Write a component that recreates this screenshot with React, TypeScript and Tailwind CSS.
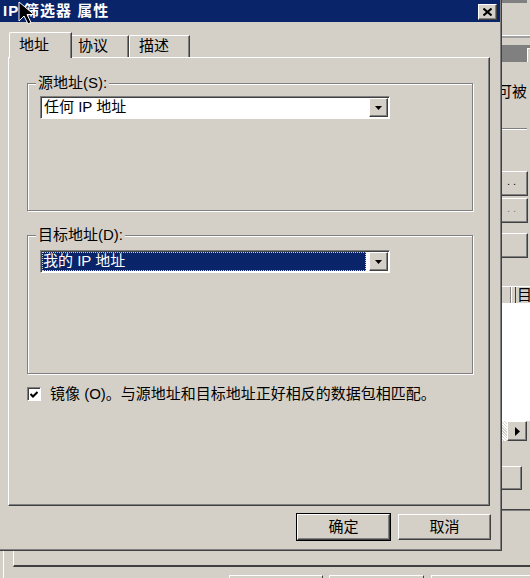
import React from 'react';

// Windows 经典风格的 3D 边框
const raised =
  'border border-t-white border-l-white border-r-[#404040] border-b-[#404040] shadow-[inset_-1px_-1px_0_#808080]';
const sunken =
  'border border-t-[#808080] border-l-[#808080] border-r-white border-b-white shadow-[inset_1px_1px_0_#404040]';
const etched = 'border border-[#808080] shadow-[inset_1px_1px_0_#fff,1px_1px_0_#fff]';

const DownArrow = () => (
  <svg width="7" height="4" viewBox="0 0 7 4">
    <path d="M0 0h7L3.5 4z" fill="#000" />
  </svg>
);

interface ComboProps {
  value: string;
  selected?: boolean;
}

// 下拉框
const Combo = ({ value, selected }: ComboProps) => (
  <div className={`w-[350px] h-[23px] flex bg-white ${sunken}`}>
    <div className="flex-1 p-[1px] pl-[1px]">
      {selected ? (
        <div className="h-full bg-[#0a246a] text-white flex items-center pl-[1px] outline-1 outline-dotted outline-[#d4d0c8] -outline-offset-1 mr-[2px]">
          {value}
        </div>
      ) : (
        <div className="h-full flex items-center pl-[2px] text-black">{value}</div>
      )}
    </div>
    <div className={`w-[19px] h-[19px] mt-[1px] mr-[1px] bg-[#d4d0c8] flex items-center justify-center ${raised}`}>
      <DownArrow />
    </div>
  </div>
);

interface GroupProps {
  label: string;
  height: string;
  children: React.ReactNode;
}

// 分组框
const Group = ({ label, height, children }: GroupProps) => (
  <div className={`relative w-[446px] ${height} ${etched} pt-[12px] pl-[12px]`}>
    <span className="absolute -top-[10px] left-[8px] px-[2px] bg-[#d4d0c8] leading-[18px]">{label}</span>
    {children}
  </div>
);

const WinButton = ({ label, isDefault }: { label: string; isDefault?: boolean }) => (
  <div
    className={`w-[93px] h-[26px] flex items-center justify-center ${
      isDefault ? 'outline outline-1 outline-black' : ''
    } ${raised}`}
  >
    {label}
  </div>
);

const Cursor = () => (
  <svg className="absolute left-[18px] top-[1px]" width="16" height="25" viewBox="0 0 16 25">
    <path d="M1 1v19l5-5 4 8 3-1.5-4-8h7z" fill="#000" stroke="#fff" strokeWidth="1" />
  </svg>
);

export default function App() {
  return (
    <div className="relative w-[530px] h-[578px] overflow-hidden bg-[#d4d0c8] text-[15px] text-black font-['Liberation_Sans','Noto_Sans_CJK_SC',sans-serif] flex flex-col">
      <div className="flex h-[551px]">
        {/* 对话框 */}
        <div className="w-[502px] h-[551px] flex flex-col border-r border-b border-r-[#404040] border-b-[#404040] shadow-[inset_-1px_-1px_0_#808080]">
          <div className="h-[22px] mr-[1px] bg-[#0a246a] flex items-center justify-between pl-[3px] pr-[3px]">
            <span className="text-white font-bold tracking-[1px]">IP 筛选器 属性</span>
            <div className={`w-[19px] h-[16px] mt-[2px] bg-[#d4d0c8] flex items-center justify-center ${raised}`}>
              <svg width="9" height="8" viewBox="0 0 9 8">
                <path d="M0.5 0.5l8 7M8.5 0.5l-8 7" stroke="#000" strokeWidth="2" />
              </svg>
            </div>
          </div>

          <div className="flex-1 pt-[10px] pl-[8px] pr-[10px] pb-[9px] flex flex-col">
            {/* 选项卡 */}
            <div className="flex items-end h-[25px] pl-[1px]">
              <div className="relative z-10 w-[63px] h-[26px] -mb-px bg-[#d4d0c8] border-t border-l border-white border-r border-r-[#404040] rounded-tl-[2px] pl-[9px] flex items-center shadow-[inset_-1px_0_0_#808080]">
                地址
              </div>
              <div className="w-[57px] h-[22px] border-t border-white pl-[6px] flex items-center border-r border-r-[#404040] shadow-[inset_-1px_0_0_#808080]">
                协议
              </div>
              <div className="w-[61px] h-[22px] border-t border-l border-white pl-[9px] flex items-center border-r border-r-[#404040] shadow-[inset_-1px_0_0_#808080] rounded-tl-[2px]">
                描述
              </div>
            </div>

            <div className="w-[482px] h-[449px] border-t border-l border-white border-r border-b border-r-[#404040] border-b-[#404040] shadow-[inset_-1px_-1px_0_#808080] pt-[25px] pl-[18px] flex flex-col">
              <Group label="源地址(S):" height="h-[128px]">
                <Combo value="任何 IP 地址" />
              </Group>
              <div className="h-[24px]" />
              <Group label="目标地址(D):" height="h-[139px]">
                <div className="mt-[2px]">
                  <Combo value="我的 IP 地址" selected />
                </div>
              </Group>

              <div className="flex items-center mt-[12px] h-[16px]">
                <div className={`w-[14px] h-[14px] bg-white flex items-center justify-center ${sunken}`}>
                  <svg width="8" height="7" viewBox="0 0 8 7">
                    <path d="M0.5 3l2.5 2.5L7.5 1" stroke="#000" strokeWidth="2" fill="none" />
                  </svg>
                </div>
                <span className="ml-[9px]">镜像 (O)。与源地址和目标地址正好相反的数据包相匹配。</span>
              </div>
            </div>

            <div className="flex justify-end gap-[8px] mt-[8px]">
              <WinButton label="确定" isDefault />
              <WinButton label="取消" />
            </div>
          </div>
        </div>

        {/* 背后的窗口（右侧） */}
        <div className="w-[28px] flex flex-col overflow-hidden">
          <div className="h-[3px] bg-[#808080] mr-[3px]" />
          <div className="h-[32px]" />
          <div className="h-[1px] bg-white" />
          <div className="h-[2px] bg-[#a0a0a0]" />
          <div className="h-[7px]" />
          <div className="h-[17px] bg-[#808080] flex justify-end">
            <div className="w-[3px] h-[14px] mt-[3px] bg-[#d4d0c8] border-t border-l border-white" />
          </div>
          <div className="h-[22px]" />
          <div className="h-[15px] leading-[15px] -ml-[5px] whitespace-nowrap">可被</div>
          <div className="h-[29px]" />
          <div className="h-[1px] bg-[#808080] mr-[3px]" />
          <div className="h-[1px] bg-white mr-[3px]" />
          <div className="h-[41px]" />
          <div className="h-[25px] mr-[2px] border-t border-white border-r border-r-[#404040] border-b border-b-[#404040] shadow-[inset_-1px_-1px_0_#808080] text-[11px] leading-[18px] pl-[5px]">. .</div>
          <div className="h-[2px]" />
          <div className="h-[25px] mr-[2px] border-t border-white border-r border-r-[#404040] border-b border-b-[#404040] shadow-[inset_-1px_-1px_0_#808080] text-[11px] leading-[18px] pl-[5px] text-[#808080]">. .</div>
          <div className="h-[10px]" />
          <div className="h-[25px] mr-[2px] border-t border-white border-r border-r-[#404040] border-b border-b-[#404040] shadow-[inset_-1px_-1px_0_#808080] -ml-[6px] pl-[1px] leading-[22px] text-[#808080]">)</div>
          <div className="h-[28px]" />
          <div className="h-[17px] flex border-t border-white">
            <div className="w-[9px] border-r border-r-[#808080]" />
            <div className="w-[5px] border-r border-r-[#404040] border-l border-white" />
            <div className="flex-1 leading-[15px] pl-[1px] overflow-hidden">目</div>
          </div>
          <div className="h-[118px] bg-white" />
          <div className="h-[20px] flex">
            <div className="w-[5px] bg-[repeating-linear-gradient(45deg,#fff_0_1px,#d4d0c8_1px_2px)]" />
            <div className={`w-[20px] h-[20px] bg-[#d4d0c8] flex items-center justify-center ${raised}`}>
              <svg width="5" height="9" viewBox="0 0 5 9">
                <path d="M0 0l5 4.5L0 9z" fill="#000" />
              </svg>
            </div>
          </div>
          <div className="h-[25px]" />
          <div className="h-[24px] w-[20px] border-t border-white border-r border-r-[#404040] border-b border-b-[#404040] shadow-[inset_-1px_-1px_0_#808080]" />
          <div className="h-[19px]" />
          <div className="h-[2px] bg-[#404040] border-b border-[#808080]" />
        </div>
      </div>

      {/* 背后的窗口（底部） */}
      <div className="h-[27px] flex">
        <div className="w-[3px]" />
        <div className="w-[1px] bg-white" />
        <div className="flex-1 flex flex-col pl-[9px]">
          <div className="h-[16px] border-l border-white border-b-2 border-b-[#404040]" />
          <div className="flex-1 flex items-end">
            <div className="w-[216px]" />
            <div className="w-[94px] h-[3px] border-t border-l border-white border-r border-r-[#404040]" />
            <div className="w-[6px]" />
            <div className="w-[95px] h-[3px] border-t border-l border-white border-r border-r-[#404040]" />
            <div className="w-[7px]" />
            <div className="flex-1 h-[3px] border-t border-l border-white" />
          </div>
        </div>
      </div>

      <Cursor />
    </div>
  );
}
